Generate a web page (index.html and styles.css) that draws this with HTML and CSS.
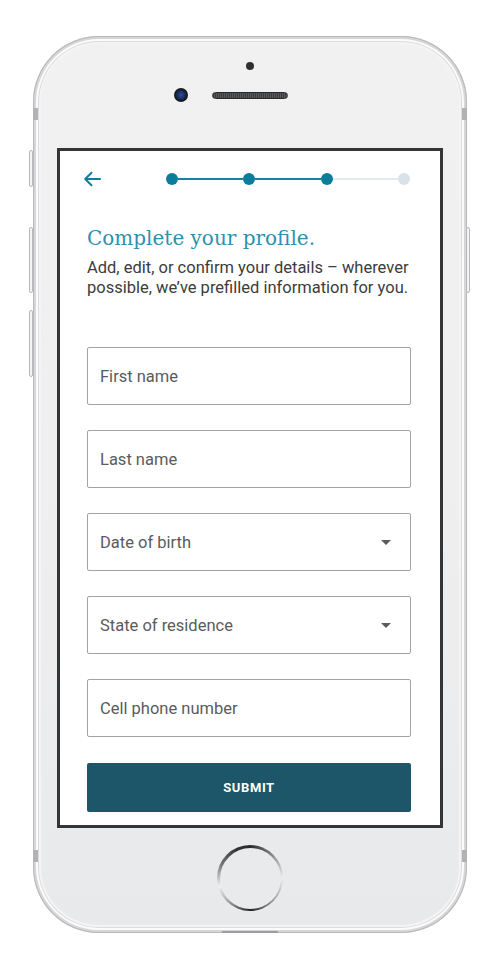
FILE: index.html
```html
<!DOCTYPE html>
<html lang="en">
<head>
<meta charset="utf-8">
<title>Complete your profile</title>
<link rel="stylesheet" href="styles.css">
</head>
<body>
<div class="page">
  <div class="phone">
    <span class="side-btn side-btn--mute"></span>
    <span class="side-btn side-btn--volup"></span>
    <span class="side-btn side-btn--voldown"></span>
    <span class="side-btn side-btn--power"></span>
    <span class="antenna antenna--tl"></span>
    <span class="antenna antenna--tr"></span>
    <span class="antenna antenna--bl"></span>
    <span class="antenna antenna--br"></span>

    <div class="sensor"></div>
    <div class="earpiece-row">
      <div class="camera"></div>
      <div class="speaker"></div>
      <div class="camera-spacer"></div>
    </div>

    <div class="screen">
      <div class="app-header">
        <svg class="back" width="18" height="16" viewBox="0 0 18 16" aria-hidden="true">
          <path d="M17 8H2.5M8.5 1.8L2.2 8l6.3 6.2" fill="none" stroke="#0f7d9b" stroke-width="2" stroke-linecap="round" stroke-linejoin="round"/>
        </svg>
        <div class="progress">
          <span class="dot dot--done"></span>
          <span class="seg seg--done"></span>
          <span class="dot dot--done"></span>
          <span class="seg seg--done"></span>
          <span class="dot dot--done"></span>
          <span class="seg"></span>
          <span class="dot"></span>
        </div>
      </div>

      <h1 class="title">Complete your profile.</h1>
      <p class="lead">Add, edit, or confirm your details – wherever possible, we’ve prefilled information for you.</p>

      <div class="form">
        <div class="field"><span class="label">First name</span></div>
        <div class="field"><span class="label">Last name</span></div>
        <div class="field field--select"><span class="label">Date of birth</span><span class="caret"></span></div>
        <div class="field field--select"><span class="label">State of residence</span><span class="caret"></span></div>
        <div class="field"><span class="label">Cell phone number</span></div>
        <div class="submit">SUBMIT</div>
      </div>
    </div>

    <div class="home"><div class="home-inner"></div></div>
    <div class="port"></div>
  </div>
</div>
</body>
</html>
```
FILE: styles.css
```css
* { box-sizing: border-box; }
html, body { margin: 0; padding: 0; background: #ffffff; }
body { font-family: Roboto, "Liberation Sans", Arial, sans-serif; }

.page {
  padding: 36px 0 0 33px;
}

.phone {
  position: relative;
  width: 434px;
  height: 897px;
  border-radius: 66px;
  background: linear-gradient(180deg, #f1f1f2 0%, #efeff0 50%, #e8e9ea 100%);
  box-shadow:
    inset 0 0 0 1px #b9b9bb,
    inset 0 0 0 3px #d6d6d8,
    inset 0 0 0 5px #fbfbfb,
    inset 0 0 0 6px #dcdcde,
    inset 0 0 0 8px #f4f4f5;
  display: flex;
  flex-direction: column;
  align-items: center;
}

.side-btn {
  position: absolute;
  width: 4px;
  border: 1px solid #b8b8ba;
  border-radius: 2px;
  background: #f4f4f4;
}
.side-btn--mute { left: -4px; top: 114px; height: 37px; }
.side-btn--volup { left: -4px; top: 191px; height: 66px; }
.side-btn--voldown { left: -4px; top: 274px; height: 67px; }
.side-btn--power { right: -3px; top: 191px; height: 66px; }

.antenna {
  position: absolute;
  width: 5px;
  height: 12px;
  background: #b2b2b4;
}
.antenna--tl { left: 0; top: 72px; }
.antenna--tr { right: 0; top: 72px; }
.antenna--bl { left: 0; top: 814px; }
.antenna--br { right: 0; top: 814px; }

.sensor {
  margin-top: 26px;
  width: 8px;
  height: 8px;
  border-radius: 50%;
  background: #2e2f31;
}

.earpiece-row {
  margin-top: 18px;
  display: flex;
  align-items: center;
  gap: 24px;
}
.camera {
  width: 14px;
  height: 14px;
  border-radius: 50%;
  background: radial-gradient(circle at 50% 50%, #2a4fa0 0, #1c2f66 35%, #14161c 62%, #2a2b2e 100%);
}
.camera-spacer { width: 14px; height: 14px; }
.speaker {
  width: 76px;
  height: 7px;
  border-radius: 4px;
  background: repeating-linear-gradient(90deg, #3b3c3e 0 1px, #58595b 1px 2px);
  border: 1px solid #2a2b2d;
}

.screen {
  margin-top: 46px;
  width: 386px;
  height: 680px;
  border: 3px solid #343536;
  background: #ffffff;
  padding: 20px 29px 0 27px;
}

.app-header {
  display: flex;
  align-items: center;
  height: 16px;
  margin-left: -4px;
}
.back { display: block; flex: none; }

.progress {
  flex: 1;
  display: flex;
  align-items: center;
  margin-left: 65px;
  margin-right: 1px;
}
.dot {
  flex: none;
  width: 12px;
  height: 12px;
  border-radius: 50%;
  background: #d9e2e8;
}
.dot--done { background: #0b7d9b; }
.seg {
  flex: 1;
  height: 2px;
  background: #e3e9ed;
}
.seg--done { background: #1883a0; }

.title {
  margin: 38px 0 0;
  font-family: "DejaVu Serif", "Liberation Serif", serif;
  font-weight: normal;
  font-size: 20px;
  line-height: 26px;
  color: #2f90ad;
}

.lead {
  margin: 7px 0 0;
  font-size: 16.5px;
  line-height: 20px;
  color: #3c3c3c;
}

.form {
  margin-top: 49px;
  display: flex;
  flex-direction: column;
  gap: 25px;
  width: 324px;
}

.field {
  height: 58px;
  border: 1.5px solid #a2a3a5;
  border-radius: 2px;
  display: flex;
  align-items: center;
  justify-content: space-between;
  padding: 0 19px 0 12px;
}
.label {
  font-size: 16.5px;
  color: #5a5b5d;
}
.caret {
  width: 0;
  height: 0;
  border-left: 5px solid transparent;
  border-right: 5px solid transparent;
  border-top: 5px solid #5a5b5d;
}

.submit {
  margin-top: 1px;
  height: 49px;
  border-radius: 2px;
  background: #1d5669;
  color: #ffffff;
  font-size: 13px;
  font-weight: bold;
  letter-spacing: 0.6px;
  display: flex;
  align-items: center;
  justify-content: center;
}

.home {
  margin-top: 17px;
  width: 66px;
  height: 66px;
  border-radius: 50%;
  padding: 2.5px;
  background: conic-gradient(from 0deg, #2a2a2a 0deg, #8a8a8a 45deg, #eeeeee 90deg, #9a9a9a 135deg, #222222 180deg, #aaaaaa 225deg, #f0f0f0 255deg, #777777 295deg, #333333 335deg, #2a2a2a 360deg);
}
.home-inner {
  width: 100%;
  height: 100%;
  border-radius: 50%;
  background: #e9eaeb;
}

.port {
  margin-top: auto;
  width: 56px;
  height: 2px;
  border-radius: 1px 1px 0 0;
  background: #9c9da0;
}
```
